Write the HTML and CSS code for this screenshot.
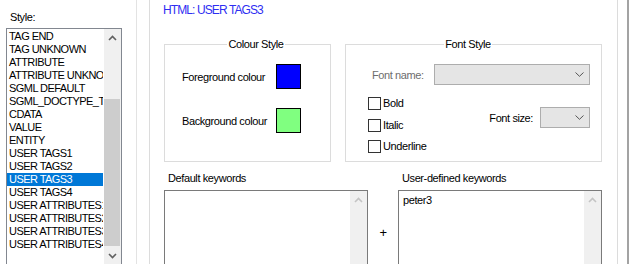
FILE: index.html
```html
<!DOCTYPE html>
<html lang="en">
<head>
    <meta charset="UTF-8">
    <meta name="viewport" content="width=device-width, initial-scale=1.0">
    <title>Style Configurator</title>
    <link rel="stylesheet" href="styles.css">
</head>
<body>
    <div class="window">
        <div class="side">
            <div class="side-label">Style:</div>
            <div class="listbox">
                <ul class="items">
                    <li>TAG END</li>
                    <li>TAG UNKNOWN</li>
                    <li>ATTRIBUTE</li>
                    <li>ATTRIBUTE UNKNOWN</li>
                    <li>SGML DEFAULT</li>
                    <li>SGML_DOCTYPE_TEXT</li>
                    <li>CDATA</li>
                    <li>VALUE</li>
                    <li>ENTITY</li>
                    <li>USER TAGS1</li>
                    <li>USER TAGS2</li>
                    <li class="selected">USER TAGS3</li>
                    <li>USER TAGS4</li>
                    <li>USER ATTRIBUTES1</li>
                    <li>USER ATTRIBUTES2</li>
                    <li>USER ATTRIBUTES3</li>
                    <li>USER ATTRIBUTES4</li>
                </ul>
                <div class="vscroll">
                    <div class="arrow"><svg width="9" height="6" viewBox="0 0 9 6"><polyline points="1,5 4.5,1.5 8,5" fill="none" stroke="#606060" stroke-width="1.6"/></svg></div>
                    <div class="track"><div class="thumb"></div></div>
                    <div class="arrow"><svg width="9" height="6" viewBox="0 0 9 6"><polyline points="1,1 4.5,4.5 8,1" fill="none" stroke="#606060" stroke-width="1.6"/></svg></div>
                </div>
            </div>
        </div>

        <div class="main">
            <div class="heading">HTML: USER TAGS3</div>

            <div class="groups">
                <fieldset class="group colour-group">
                    <legend>Colour Style</legend>
                    <div class="colour-grid">
                        <span>Foreground colour</span>
                        <span class="swatch fg"></span>
                        <span>Background colour</span>
                        <span class="swatch bg"></span>
                    </div>
                </fieldset>

                <fieldset class="group font-group">
                    <legend>Font Style</legend>
                    <div class="font-name">
                        <span class="disabled">Font name:</span>
                        <div class="combo wide"><svg width="9" height="5" viewBox="0 0 9 5"><polyline points="0.5,0.5 4.5,4.3 8.5,0.5" fill="none" stroke="#555" stroke-width="1"/></svg></div>
                    </div>
                    <div class="font-opts">
                        <div class="checks">
                            <label class="check"><span class="box"></span>Bold</label>
                            <label class="check"><span class="box"></span>Italic</label>
                            <label class="check"><span class="box"></span>Underline</label>
                        </div>
                        <div class="font-size">
                            <span>Font size:</span>
                            <div class="combo narrow"><svg width="9" height="5" viewBox="0 0 9 5"><polyline points="0.5,0.5 4.5,4.3 8.5,0.5" fill="none" stroke="#555" stroke-width="1"/></svg></div>
                        </div>
                    </div>
                </fieldset>
            </div>

            <div class="keywords">
                <div class="kw-col">
                    <div class="kw-label">Default keywords</div>
                    <div class="textbox">
                        <div class="text"></div>
                        <div class="vscroll off">
                            <div class="arrow"><svg width="9" height="6" viewBox="0 0 9 6"><polyline points="1,5 4.5,1.5 8,5" fill="none" stroke="#c4c4c4" stroke-width="1.6"/></svg></div>
                            <div class="track"></div>
                            <div class="arrow"><svg width="9" height="6" viewBox="0 0 9 6"><polyline points="1,1 4.5,4.5 8,1" fill="none" stroke="#c4c4c4" stroke-width="1.6"/></svg></div>
                        </div>
                    </div>
                </div>
                <div class="plus">+</div>
                <div class="kw-col">
                    <div class="kw-label">User-defined keywords</div>
                    <div class="textbox">
                        <div class="text">peter3</div>
                        <div class="vscroll off">
                            <div class="arrow"><svg width="9" height="6" viewBox="0 0 9 6"><polyline points="1,5 4.5,1.5 8,5" fill="none" stroke="#c4c4c4" stroke-width="1.6"/></svg></div>
                            <div class="track"></div>
                            <div class="arrow"><svg width="9" height="6" viewBox="0 0 9 6"><polyline points="1,1 4.5,4.5 8,1" fill="none" stroke="#c4c4c4" stroke-width="1.6"/></svg></div>
                        </div>
                    </div>
                </div>
            </div>
        </div>

        <div class="edge"></div>
    </div>
</body>
</html>
```

FILE: styles.css
```css
body{
    margin: 0;
    background-color: #fff;
    font-family: "Liberation Sans", Arial, sans-serif;
    font-size: 11px;
    letter-spacing: -0.4px;
    color: #000;
    overflow: hidden;
}
.window{
    display: flex;
    width: 630px;
    height: 264px;
    overflow: hidden;
}

/* left column with the style list */
.side{
    width: 137px;
    flex-shrink: 0;
    border-right: 1px solid #e3e3e3;
    padding: 11px 0 0 6px;
    box-sizing: border-box;
}
.side-label{
    line-height: 13px;
    padding-left: 4px;
}
.listbox{
    display: flex;
    width: 116px;
    height: 237px;
    margin-top: 4px;
    border: 1px solid #828790;
    box-sizing: border-box;
}
.items{
    flex: 1;
    list-style: none;
    margin: 0;
    padding: 1px 0 0 0;
    overflow: hidden;
}
.items li{
    height: 13px;
    line-height: 13px;
    padding-left: 2px;
    white-space: nowrap;
    overflow: hidden;
    width: 94px;
    letter-spacing: -0.55px;
}
.items li.selected{
    background-color: #0078d7;
    color: #fff;
}

.vscroll{
    width: 17px;
    flex-shrink: 0;
    display: flex;
    flex-direction: column;
    background-color: #f0f0f0;
}
.vscroll .arrow{
    height: 17px;
    display: flex;
    align-items: center;
    justify-content: center;
}
.vscroll .track{
    flex: 1;
    display: flex;
    flex-direction: column;
}
.vscroll .thumb{
    flex: 1;
    margin: 53px 1px 1px 0;
    background-color: #cdcdcd;
}

/* right panel */
.main{
    width: 469px;
    flex-shrink: 0;
    margin-left: 12px;
    border-left: 1px solid #dcdcdc;
    border-right: 1px solid #dcdcdc;
    box-sizing: border-box;
    padding: 3px 0 0 14px;
}
.heading{
    color: #2e2ef2;
    font-size: 12px;
    line-height: 14px;
    letter-spacing: -0.9px;
    margin-left: -1px;
}
.groups{
    display: flex;
    gap: 14px;
    margin-top: 21px;
}
.group{
    margin: 0;
    border: 1px solid #dcdcdc;
    box-sizing: border-box;
    height: 124px;
    min-width: 0;
    padding: 13px 0 0 0;
}
.group legend{
    margin: 0 auto;
    padding: 0 1px;
    line-height: 13px;
}
.colour-group{
    width: 167px;
    padding-left: 17px;
}
.colour-grid{
    display: grid;
    grid-template-columns: 94px 25px;
    grid-auto-rows: 25px;
    row-gap: 19px;
    align-items: center;
}
.swatch{
    width: 25px;
    height: 25px;
    border: 1px solid #000;
    box-sizing: border-box;
}
.swatch.fg{
    background-color: #0000ff;
}
.swatch.bg{
    background-color: #80ff80;
}

.font-group{
    width: 257px;
    padding-right: 11px;
}
.font-name{
    display: flex;
    align-items: center;
    justify-content: space-between;
    padding-left: 26px;
}
.disabled{
    color: #6d6d6d;
}
.combo{
    height: 21px;
    background-color: #e5e5e5;
    border: 1px solid #adadad;
    box-sizing: border-box;
    display: flex;
    align-items: center;
    justify-content: flex-end;
    padding-right: 5px;
}
.combo.wide{
    width: 156px;
}
.combo.narrow{
    width: 50px;
}
.font-opts{
    display: flex;
    justify-content: space-between;
    margin-top: 12px;
    padding-left: 22px;
}
.checks{
    display: flex;
    flex-direction: column;
}
.check{
    display: flex;
    align-items: flex-start;
    height: 21.5px;
    line-height: 13px;
}
.box{
    width: 13px;
    height: 13px;
    border: 1px solid #333;
    box-sizing: border-box;
    background-color: #fff;
    margin-right: 2px;
}
.font-size{
    display: flex;
    align-items: center;
    gap: 7px;
    margin-top: 10px;
    height: 21px;
}

/* keyword boxes */
.keywords{
    display: flex;
    margin-top: 10px;
}
.kw-col{
    width: 204px;
}
.kw-label{
    line-height: 13px;
    padding-left: 4px;
    margin-bottom: 5px;
}
.textbox{
    display: flex;
    height: 86px;
    border: 1px solid #7a7a7a;
    box-sizing: border-box;
}
.textbox .text{
    flex: 1;
    padding: 3px 4px;
    line-height: 13px;
}
.plus{
    width: 30px;
    text-align: center;
    align-self: flex-end;
    height: 86px;
    line-height: 86px;
    font-size: 13px;
}

.edge{
    width: 2px;
    flex-shrink: 0;
    margin-left: 9px;
    background-color: #a3a3a3;
}
```
